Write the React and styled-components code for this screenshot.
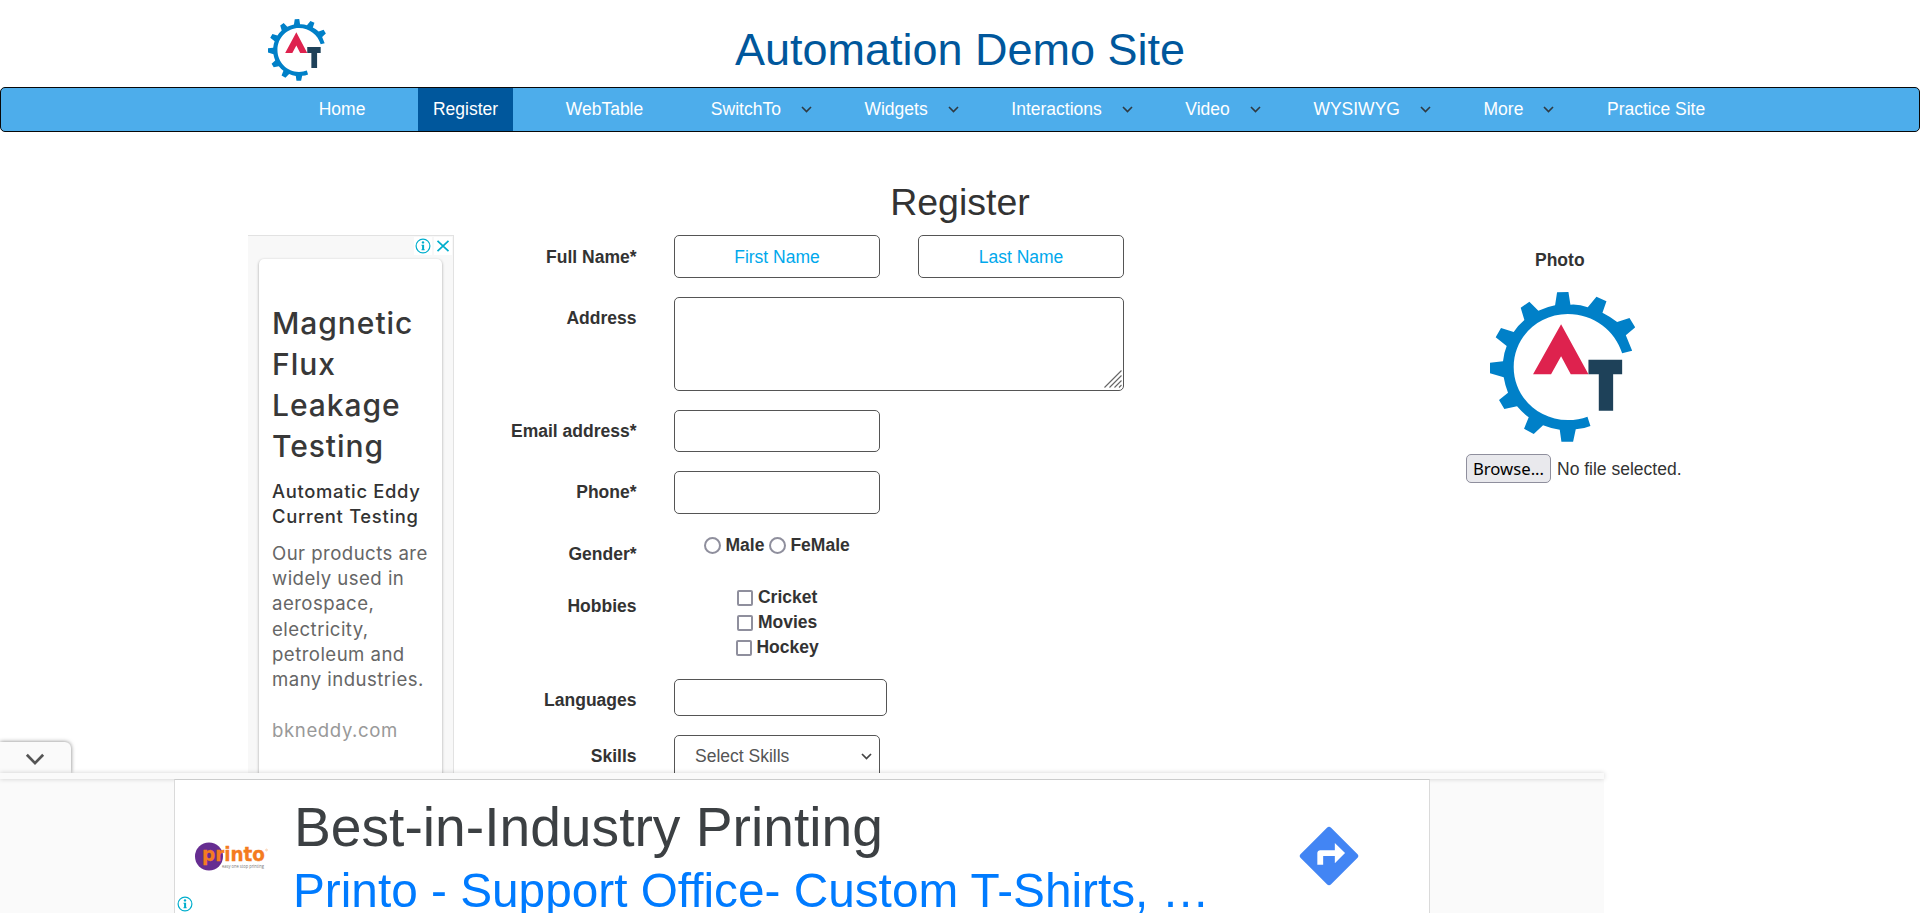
import React from "react";
import styled, { createGlobalStyle } from "styled-components";

const GlobalStyle = createGlobalStyle`
  * { box-sizing: border-box; }
  html, body { margin: 0; padding: 0; height: 100%; overflow: hidden; background: #fff; }
  body { font-family: "Liberation Sans", Arial, sans-serif; font-size: 17.5px; line-height: 25px; color: #333; }
  svg { display: block; }
`;

const Page = styled.div`
  height: 913px;
  overflow: hidden;
`;

const Header = styled.header`
  display: grid;
  grid-template-columns: 268px 58px 1fr 326px;
  height: 87px;
  padding-top: 19px;
`;

const HeaderLogo = styled.div`
  grid-column: 2;
  height: 62px;
`;

const SiteTitle = styled.h1`
  margin: 0;
  padding-top: 5px;
  font-size: 45px;
  line-height: 52px;
  height: 57px;
  font-weight: 400;
  color: #00579c;
  text-align: center;
`;

const Nav = styled.nav`
  display: flex;
  gap: 37.6px;
  height: 45px;
  padding-left: 302.7px;
  border: 1px solid #080808;
  border-radius: 5px;
  background: #4dadeb;
`;

const NavItem = styled.a`
  display: flex;
  align-items: center;
  gap: 20px;
  height: 43px;
  padding: 0 ${(p) => (p.$menu ? 0 : 15)}px 0 15px;
  line-height: 25px;
  color: #fff;
  background: ${(p) => (p.$active ? "#00579c" : "transparent")};
  white-space: nowrap;
`;

const PageTitle = styled.h2`
  margin: 41px 0 0;
  height: 62px;
  font-size: 37.5px;
  line-height: 58px;
  font-weight: 400;
  text-align: center;
`;

const Main = styled.main`
  display: grid;
  grid-template-columns: 206px 670px 342px 1fr;
  padding-left: 248px;
`;

const SideAd = styled.aside`
  height: 600px;
  padding: 0 11px;
  background: #f8f8f8;
  border-top: 1px solid #e2e2e2;
  border-right: 1px solid #e2e2e2;
`;

const AdChoices = styled.div`
  display: flex;
  justify-content: flex-end;
  gap: 2px;
  height: 23px;
  padding-top: 1px;
  margin-right: -10px;
`;

const AdBadge = styled.span`
  display: grid;
  place-items: center;
  width: 18px;
  height: 18px;
  background: #fff;
`;

const AdCard = styled.div`
  height: 570px;
  padding: 44px 0 0 13px;
  background: #fff;
  border-radius: 5px;
  box-shadow: 0 1px 3px rgba(0, 0, 0, 0.36);
  font-family: Inter, "Open Sans", sans-serif;
  white-space: nowrap;
`;

const AdHeadline = styled.div`
  font-size: 30px;
  line-height: 41px;
  font-weight: 500;
  letter-spacing: 0.95px;
  color: #383838;
`;

const AdSubhead = styled.div`
  margin-top: 12px;
  font-size: 18.4px;
  line-height: 25.2px;
  font-weight: 500;
  letter-spacing: 0.68px;
  color: #333;
`;

const AdCopy = styled.div`
  margin-top: 11.6px;
  font-size: 18.6px;
  line-height: 25.2px;
  letter-spacing: 0.45px;
  color: #666;
`;

const AdDomain = styled.div`
  margin-top: 26px;
  font-size: 18.6px;
  line-height: 25.2px;
  letter-spacing: 0.6px;
  color: #999;
`;

const Form = styled.form`
  display: flex;
  flex-direction: column;
  gap: 19px;
`;

const Row = styled.div`
  display: grid;
  grid-template-columns: 182.5px 450px;
  column-gap: 37.5px;
  height: ${(p) => p.$h}px;
`;

const Label = styled.label`
  padding-top: ${(p) => (p.$low ? 10 : 9)}px;
  font-weight: 700;
  text-align: right;
`;

const Pair = styled.div`
  display: flex;
  gap: 38px;
`;

const Field = styled.input`
  width: ${(p) => p.$w || 206}px;
  height: ${(p) => p.$h || 43}px;
  padding: 1px 12px 0;
  border: 1px solid #555;
  border-radius: 5px;
  outline: 0;
  background: #fff;
  font: inherit;
  text-align: center;
  &::placeholder { color: #00a8ec; opacity: 1; }
`;

const AreaWrap = styled.div`
  position: relative;
  height: 94px;
`;

const Area = styled.textarea`
  display: block;
  width: 450px;
  height: 94px;
  border: 1px solid #555;
  border-radius: 5px;
  resize: none;
  font: inherit;
`;

const Grip = styled.svg`
  position: absolute;
  right: 1px;
  bottom: 2px;
`;

const RadioLine = styled.div`
  padding-left: 30px;
  display: flex;
  gap: 4.5px;
  height: 25px;
  font-weight: 700;
`;

const Radio = styled.input.attrs({ type: "radio" })`
  appearance: none;
  width: 17px;
  height: 17px;
  margin: 4px 0 0;
  border: 2px solid #8f8f9d;
  border-radius: 50%;
  background: #fff;
`;

const CheckList = styled.div`
  display: flex;
  flex-direction: column;
  align-items: center;
  width: 206.4px;
  padding-top: 1px;
`;

const CheckLine = styled.label`
  display: flex;
  gap: 4.86px;
  height: 25px;
  font-weight: 700;
`;

const Check = styled.input.attrs({ type: "checkbox" })`
  appearance: none;
  width: 16px;
  height: 16px;
  margin: 5px 0 0;
  border: 2px solid #8f8f9d;
  border-radius: 2px;
  background: #fff;
`;

const SelectBox = styled.div`
  display: flex;
  justify-content: space-between;
  align-items: center;
  width: 206px;
  height: 43px;
  padding: 0 7px 1px 20px;
  border: 1px solid #555;
  border-radius: 5px;
  color: #555;
`;

const PhotoPanel = styled.section`
  grid-column: 4;
`;

const PhotoLabel = styled.div`
  padding: 13px 0 0 69px;
  font-weight: 700;
`;

const PhotoLogo = styled.div`
  width: 146px;
  height: 150px;
  margin: 19px 0 12px 23.5px;
`;

const FileRow = styled.div`
  display: flex;
  align-items: center;
  gap: 6px;
  height: 29px;
`;

const FileStatus = styled.span`
  padding-top: 2px;
`;

const BrowseButton = styled.button`
  width: 85px;
  height: 29px;
  padding: 0;
  border: 1px solid #8f8f9d;
  border-radius: 5px;
  background: #e9e9ed;
  color: #000;
  font: 16.7px/24px "Noto Sans", "Open Sans", sans-serif;
`;

const BottomAd = styled.aside`
  position: fixed;
  left: 0;
  top: 742px;
  width: 1604px;
  height: 171px;
`;

const CollapseTab = styled.button`
  display: grid;
  place-items: center;
  width: 71px;
  height: 31px;
  padding: 4px 1px 0 0;
  border: 0;
  border-radius: 0 6px 0 0;
  background: #fafafa;
  box-shadow: 0 0 4px rgba(0, 0, 0, 0.5);
`;

const Strip = styled.div`
  position: relative;
  height: 6px;
  background: #fafafa;
  box-shadow: 0 0 5px rgba(0, 0, 0, 0.18);
`;

const BottomBody = styled.div`
  height: 134px;
  background: #fafafa;
`;

const Banner = styled.div`
  display: grid;
  grid-template-columns: 119px 1fr 135px;
  grid-template-rows: 133px;
  width: 1256px;
  height: 134px;
  margin-left: 174px;
  background: #fff;
  border: 1px solid #dadada;
  border-top-color: #cbcccc;
  border-bottom: 0;
  position: relative;
`;

const BannerBrand = styled.div`
  display: flex;
  flex-direction: column;
  justify-content: space-between;
  padding: 60px 0 1px 1.5px;
`;

const BannerText = styled.div`
  white-space: nowrap;
`;

const BannerTitle = styled.div`
  padding-top: 11px;
  font-size: 55.2px;
  line-height: 72px;
  height: 84px;
  color: #3c4043;
`;

const BannerLink = styled.div`
  margin-left: -1px;
  font-size: 47.75px;
  line-height: 54px;
  color: #007bff;
`;

const BannerAction = styled.div`
  padding: 41px 0 0 0;
`;

function GearLogo({ width, height }) {
  return (
    <svg width={width} height={height} viewBox="119 186 436 450" preserveAspectRatio="none">
      <path
        d="M545 362L526 316L554 292L537 264L500 276Q480 260 456 248L468 214L438 200L412 232Q386 222 360 224L354 186L320 187L314 226Q288 231 264 242L237 215L211 233L222 270Q203 286 190 306L152 294L136 322L169 348Q160 370 158 394L119 398L119 430L160 442Q164 466 173 488L146 510L162 537L200 529Q216 548 235 562L221 596L250 612L278 586Q302 596 328 599L333 635L368 635L376 598Q399 597 420 588L411 560Q385 570 352 570C262 570 190 499 190 411C190 323 262 252 352 252C430 252 495 303 515 370Z"
        fill="#0080c8"
      />
      <path d="M332 283L414 433H361L332 379L302 433H248Z" fill="#de224e" />
      <path d="M414 389H515V433H488V542H445V433H414Z" fill="#1e4159" />
    </svg>
  );
}

function Chevron({ width = 11, height = 7, color = "#2f3a42", stroke = 1.6 }) {
  return (
    <svg width={width} height={height} viewBox="0 0 11 7">
      <path d="M1 1L5.5 5.6L10 1" fill="none" stroke={color} strokeWidth={stroke} />
    </svg>
  );
}

function InfoIcon() {
  return (
    <svg width="16" height="16" viewBox="0 0 16 16">
      <circle cx="8" cy="8" r="6.9" fill="none" stroke="#00aecd" strokeWidth="1.2" />
      <circle cx="8" cy="4.4" r="1.2" fill="#00aecd" />
      <path d="M6.5 6.7H9.1V11.3H9.7V12.3H6.5V11.3H7.1V7.7H6.5Z" fill="#00aecd" />
    </svg>
  );
}

function CloseIcon() {
  return (
    <svg width="14" height="14" viewBox="0 0 14 14">
      <path d="M1.5 1.8L12.5 12.2M12.5 1.8L1.5 12.2" stroke="#00aecd" strokeWidth="1.7" />
    </svg>
  );
}

function PrintoLogo() {
  return (
    <svg width="92" height="34" viewBox="177 840 92 34">
      <circle cx="209" cy="856.5" r="14" fill="#662d91" />
      <text x="202" y="861.3" fontFamily="DejaVu Sans, sans-serif" fontWeight="700" fontSize="18.8" textLength="63" lengthAdjust="spacingAndGlyphs" fill="#f47b20" stroke="#f47b20" strokeWidth=".3">printo</text>
      <text x="222" y="867.5" fontFamily="Open Sans, sans-serif" fontSize="5" textLength="42" lengthAdjust="spacingAndGlyphs" fill="#777">easy one stop printing</text>
      <circle cx="266.5" cy="850" r="0.9" fill="none" stroke="#f7a76a" strokeWidth=".5" />
    </svg>
  );
}

function DirectionsIcon() {
  return (
    <svg width="70" height="70" viewBox="0 0 24 24">
      <path
        fill="#4285f4"
        d="M21.71 11.29l-9-9a.996.996 0 0 0-1.41 0l-9 9a.996.996 0 0 0 0 1.41l9 9c.39.39 1.02.39 1.41 0l9-9a.996.996 0 0 0 0-1.41zM14 14.5V12h-4v3H8v-4c0-.55.45-1 1-1h5V7.5l3.5 3.5-3.5 3.5z"
      />
    </svg>
  );
}

const NAV = [
  ["Home"],
  ["Register", false, true],
  ["WebTable"],
  ["SwitchTo", true],
  ["Widgets", true],
  ["Interactions", true],
  ["Video", true],
  ["WYSIWYG", true],
  ["More", true],
  ["Practice Site"],
];

export default function App() {
  return (
    <Page>
      <GlobalStyle />
      <Header>
        <HeaderLogo><GearLogo width={58} height={62} /></HeaderLogo>
        <SiteTitle>Automation Demo Site</SiteTitle>
      </Header>
      <Nav>
        {NAV.map(([name, menu, active]) => (
          <NavItem key={name} $menu={menu} $active={active}>
            {name}
            {menu && <Chevron />}
          </NavItem>
        ))}
      </Nav>
      <PageTitle>Register</PageTitle>
      <Main>
        <SideAd>
          <AdChoices>
            <AdBadge><InfoIcon /></AdBadge>
            <AdBadge><CloseIcon /></AdBadge>
          </AdChoices>
          <AdCard>
            <AdHeadline>Magnetic<br />Flux<br />Leakage<br />Testing</AdHeadline>
            <AdSubhead>Automatic Eddy<br />Current Testing</AdSubhead>
            <AdCopy>
              Our products are<br />widely used in<br />aerospace,<br />electricity,<br />petroleum and<br />many industries.
            </AdCopy>
            <AdDomain>bkneddy.com</AdDomain>
          </AdCard>
        </SideAd>
        <Form>
          <Row $h={43}>
            <Label $low>Full Name*</Label>
            <Pair>
              <Field placeholder="First Name" />
              <Field placeholder="Last Name" />
            </Pair>
          </Row>
          <Row $h={94}>
            <Label>Address</Label>
            <AreaWrap>
              <Area />
              <Grip width="20" height="20" viewBox="0 0 20 20">
                <path d="M1.5 18.5L18.5 1.5M6.5 18.5L18.5 6.5M11.5 18.5L18.5 11.5M16 18.5L18.5 16" stroke="#666" strokeWidth="1.1" />
              </Grip>
            </AreaWrap>
          </Row>
          <Row $h={42}>
            <Label>Email address*</Label>
            <Field $h={42} />
          </Row>
          <Row $h={43}>
            <Label>Phone*</Label>
            <Field />
          </Row>
          <Row $h={32}>
            <Label>Gender*</Label>
            <RadioLine>
              <Radio name="gender" /><span>Male</span>
              <Radio name="gender" /><span>FeMale</span>
            </RadioLine>
          </Row>
          <Row $h={76}>
            <Label $low>Hobbies</Label>
            <CheckList>
              {["Cricket", "Movies", "Hockey"].map((hobby) => (
                <CheckLine key={hobby}><Check />{hobby}</CheckLine>
              ))}
            </CheckList>
          </Row>
          <Row $h={37}>
            <Label>Languages</Label>
            <Field $w={213} $h={37} />
          </Row>
          <Row $h={43}>
            <Label>Skills</Label>
            <SelectBox>Select Skills<Chevron color="#444" stroke={1.7} /></SelectBox>
          </Row>
        </Form>
        <PhotoPanel>
          <PhotoLabel>Photo</PhotoLabel>
          <PhotoLogo><GearLogo width={145.5} height={150} /></PhotoLogo>
          <FileRow>
            <BrowseButton type="button">Browse...</BrowseButton>
            <FileStatus>No file selected.</FileStatus>
          </FileRow>
        </PhotoPanel>
      </Main>
      <BottomAd>
        <CollapseTab aria-label="Collapse">
          <Chevron width={20} height={12.7} color="#555" stroke={1.5} />
        </CollapseTab>
        <Strip />
        <BottomBody>
          <Banner>
            <BannerBrand>
              <PrintoLogo />
              <InfoIcon />
            </BannerBrand>
            <BannerText>
              <BannerTitle>Best-in-Industry Printing</BannerTitle>
              <BannerLink>Printo - Support Office- Custom T-Shirts, …</BannerLink>
            </BannerText>
            <BannerAction><DirectionsIcon /></BannerAction>
          </Banner>
        </BottomBody>
      </BottomAd>
    </Page>
  );
}
